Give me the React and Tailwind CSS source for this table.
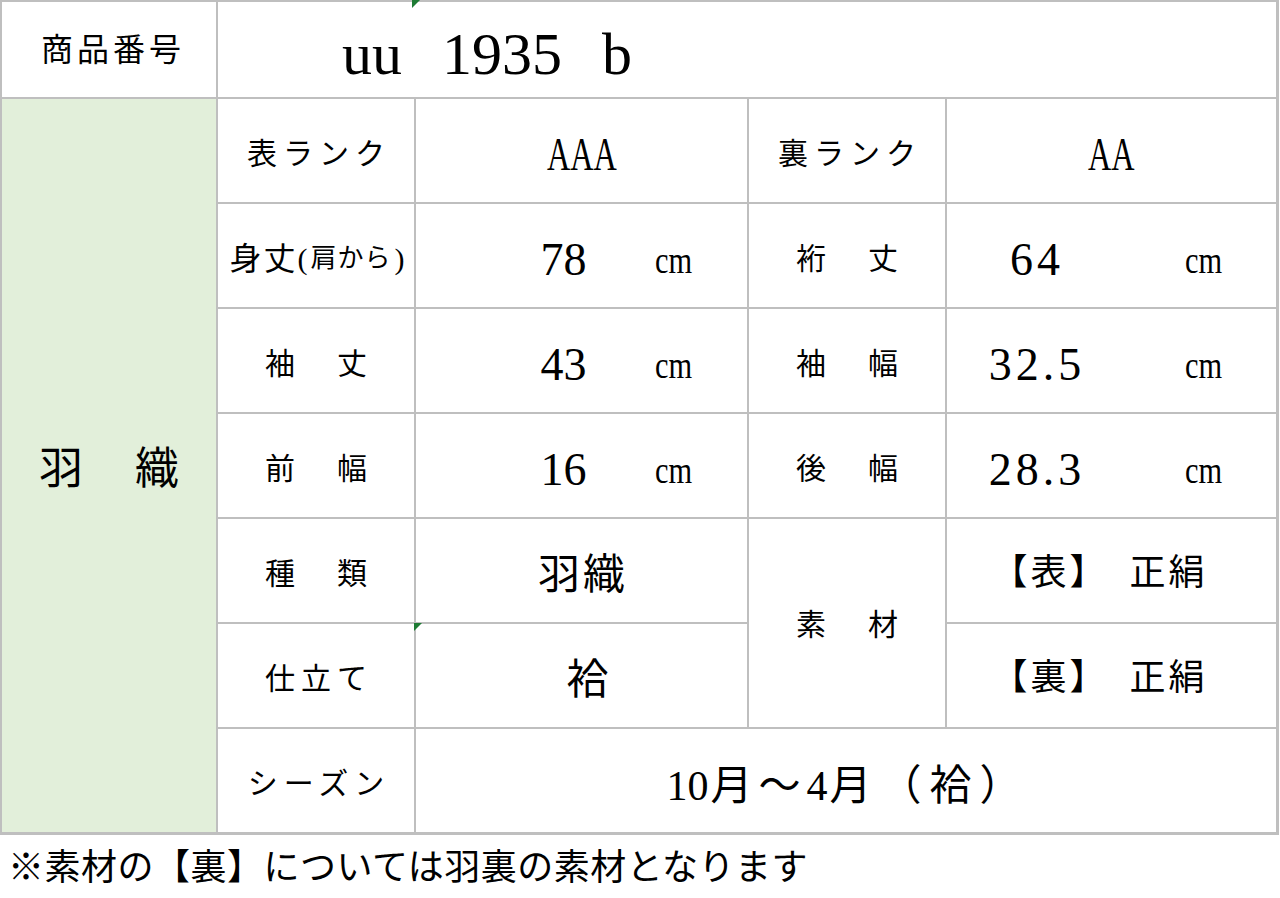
import React from "react";

const serif = "font-['Liberation_Serif','Noto_Sans_CJK_JP',serif]";

const Cell = ({ className = "", bg = "bg-white", children }) => (
  <div className={`relative flex items-center justify-center ${bg} ${className}`}>
    {children}
  </div>
);

const Label = ({ children }) => (
  <Cell>
    <span className="text-[30px] leading-none tracking-[6px] pl-[6px] mt-[6px]">{children}</span>
  </Cell>
);

const Mark = ({ className = "" }) => (
  <span
    className={`absolute w-0 h-0 border-t-[8px] border-r-[8px] border-t-[#1e7b34] border-r-transparent ${className}`}
  />
);

const Measure = ({ value, wide }) => (
  <Cell className="justify-start">
    <div className={`flex items-center mt-[8px] ${wide ? "pl-[20px]" : "pl-[100px]"}`}>
      <span
        className={`text-center text-[46px] leading-none ${wide ? "w-[140px] tracking-[4px]" : "w-[95px]"}`}
      >
        {value}
      </span>
      <span
        className={`inline-block origin-left scale-x-[0.8] text-[38px] leading-none ${wide ? "ml-[78px]" : "ml-[44px]"}`}
      >
        cm
      </span>
    </div>
  </Cell>
);

const Material = ({ side }) => (
  <Cell>
    <span className="text-[36px] leading-none tracking-[3px] mt-[4px] mr-[24px]">
      【{side}】　正絹
    </span>
  </Cell>
);

export default function App() {
  return (
    <div className={`w-[1280px] h-[898px] bg-white text-black ${serif}`}>
      <div className="grid w-[1279px] grid-cols-[214px_196px_331px_196px_329px] grid-rows-[95px_repeat(7,103px)] gap-[2px] border-t-2 border-l-2 border-r-[3px] border-b-[3px] border-[#bfbfbf] bg-[#bfbfbf]">
        <Cell>
          <span className="text-[32px] leading-none tracking-[4px] pl-[4px] ml-[4px]">商品番号</span>
        </Cell>
        <Cell className="col-span-4 justify-start">
          <Mark className="-top-[2px] left-[194px]" />
          <div className="flex items-baseline gap-[40px] pl-[124px] mt-[8px] text-[60px] leading-none">
            <span>uu</span>
            <span>1935</span>
            <span>b</span>
          </div>
        </Cell>

        <Cell className="row-span-7" bg="bg-[#e2efda]">
          <span className="text-[44px] leading-none tracking-[4px] pl-[4px] mt-[8px]">羽　織</span>
        </Cell>

        <Label>表ランク</Label>
        <Cell>
          <span className="inline-block scale-x-[0.7] text-[46px] leading-none mt-[8px]">AAA</span>
        </Cell>
        <Label>裏ランク</Label>
        <Cell>
          <span className="inline-block scale-x-[0.7] text-[46px] leading-none mt-[8px]">AA</span>
        </Cell>

        <Cell>
          <span className="flex items-center leading-none mt-[6px] ml-[2px]">
            <span className="text-[32px] tracking-[2px]">身丈</span>
            <span className="text-[30px]">(</span>
            <span className="text-[26px] tracking-[1px] px-[3px]">肩から</span>
            <span className="text-[30px]">)</span>
          </span>
        </Cell>
        <Measure value="78" />
        <Label>裄　丈</Label>
        <Measure value="64" wide />

        <Label>袖　丈</Label>
        <Measure value="43" />
        <Label>袖　幅</Label>
        <Measure value="32.5" wide />

        <Label>前　幅</Label>
        <Measure value="16" />
        <Label>後　幅</Label>
        <Measure value="28.3" wide />

        <Label>種　類</Label>
        <Cell>
          <span className="text-[42px] leading-none tracking-[3px] pl-[3px] mt-[8px]">羽織</span>
        </Cell>
        <Cell className="row-span-2">
          <span className="text-[30px] leading-none tracking-[6px] pl-[6px] mt-[4px]">素　材</span>
        </Cell>
        <Material side="表" />

        <Label>仕立て</Label>
        <Cell>
          <Mark className="-top-[1px] -left-[2px]" />
          <span className="text-[42px] leading-none mt-[8px] ml-[12px]">袷</span>
        </Cell>
        <Material side="裏" />

        <Label>シーズン</Label>
        <Cell className="col-span-3">
          <span className="flex items-baseline text-[42px] leading-none mt-[10px] ml-[4px]">
            <span>10</span>
            <span className="tracking-[6px] pl-[2px]">月～</span>
            <span>4</span>
            <span className="tracking-[8px] pl-[2px]">月（袷）</span>
          </span>
        </Cell>
      </div>

      <p className="pl-[8px] mt-[13px] text-[36px] leading-[40px] tracking-[0.5px]">
        ※素材の【裏】については羽裏の素材となります
      </p>
    </div>
  );
}
